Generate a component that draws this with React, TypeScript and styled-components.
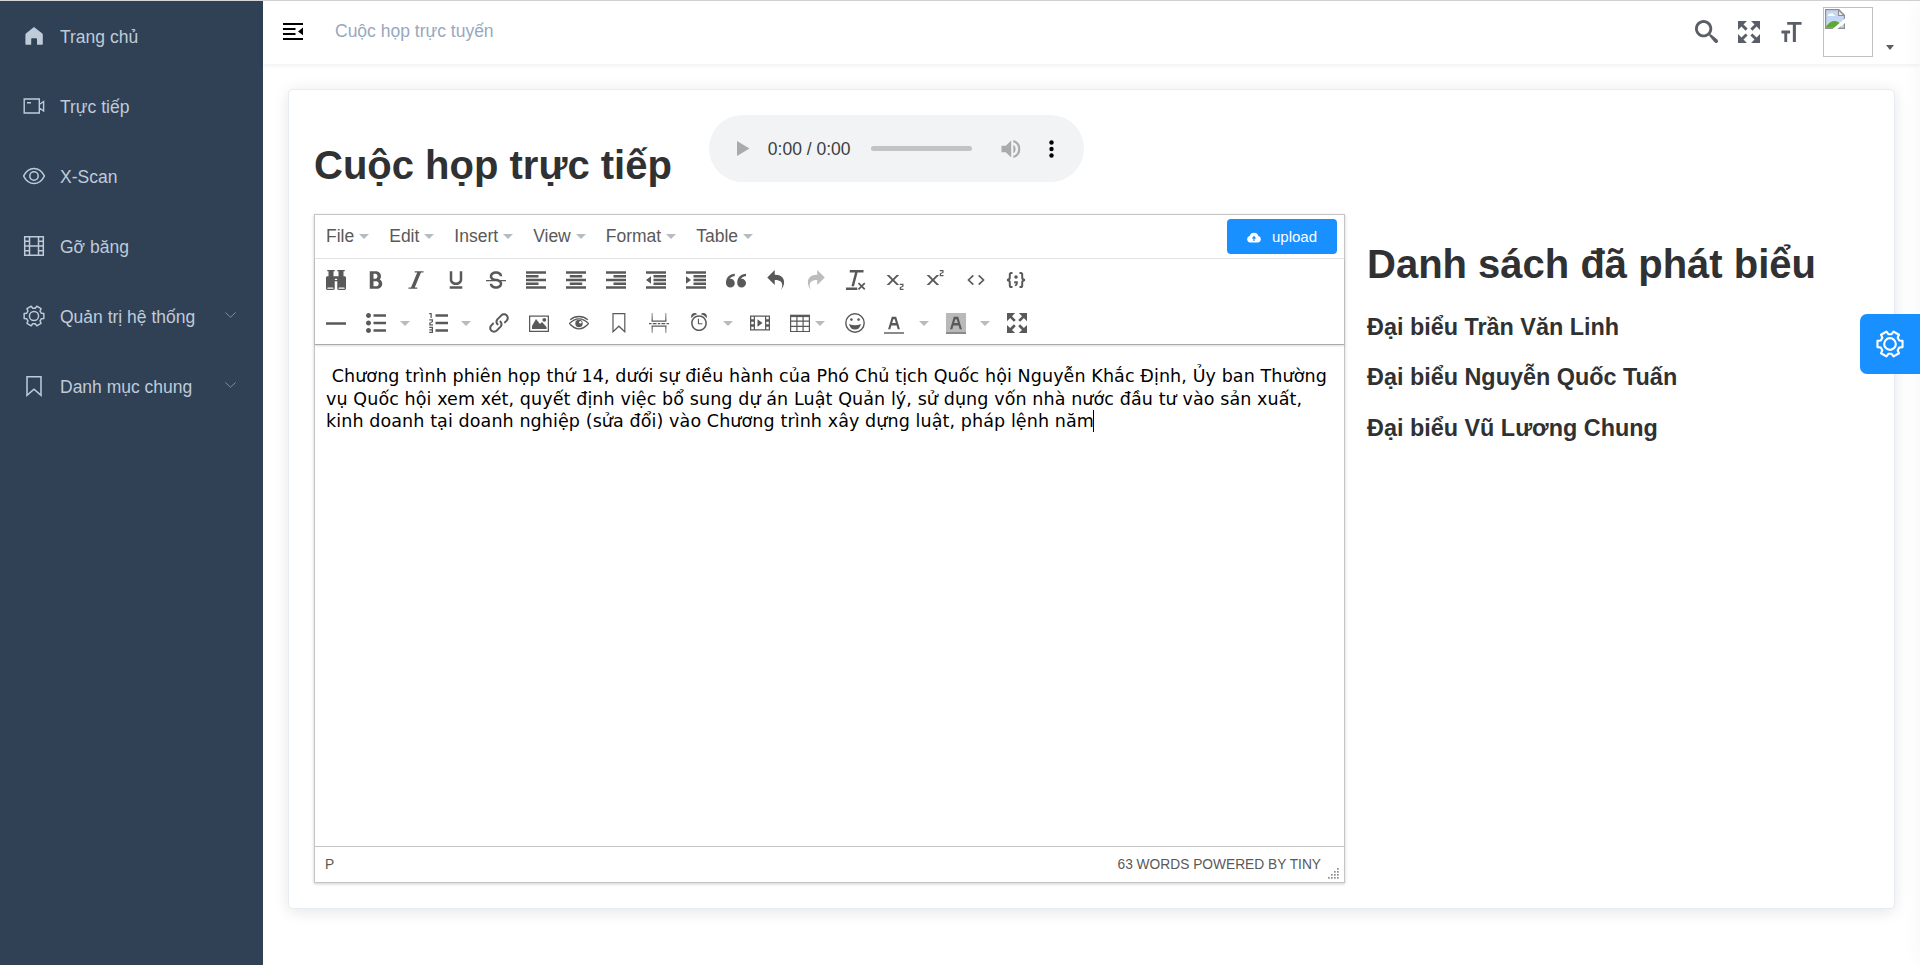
import React from "react";
import styled, { createGlobalStyle } from "styled-components";
import {
  ImBinoculars, ImBold, ImItalic, ImUnderline, ImStrikethrough, ImParagraphLeft, ImParagraphCenter,
  ImParagraphRight, ImIndentDecrease, ImIndentIncrease, ImQuotesLeft, ImUndo2, ImRedo2,
  ImClearFormatting, ImSubscript, ImSuperscript, ImList2, ImListNumbered, ImLink, ImPageBreak,
  ImAlarm, ImFilm, ImEnlarge, ImSearch, ImFontSize, ImTextColor,
} from "react-icons/im";

const GlobalStyle = createGlobalStyle`
  * { box-sizing: border-box; }
  body {
    margin: 0;
    background: #fff;
    color: #303133;
    font-family: "Liberation Sans", Arial, sans-serif;
    font-size: 17.5px;
    overflow: hidden;
  }
  svg { display: block; flex: none; }
`;

/* ---------- page frame ---------- */

const Page = styled.div`
  display: flex;
  height: 965px;
  border-top: 1px solid #d5d6d8;
`;

const Sidebar = styled.nav`
  width: 263px;
  flex: none;
  background: #304156;
`;

const NavItem = styled.a`
  display: flex;
  align-items: center;
  height: 70px;
  padding: 0 27px 0 23px;
  gap: 15px;
  color: #bfcbd9;
  white-space: nowrap;
`;

const NavLabel = styled.span`
  flex: 1;
  padding-top: 3px;
`;

const Main = styled.main`
  flex: 1;
  min-width: 0;
  display: flex;
  flex-direction: column;
`;

const Header = styled.header`
  display: flex;
  align-items: center;
  height: 63px;
  padding: 0 26px 2px 19px;
  box-shadow: 0 1px 5px rgba(0, 21, 41, 0.08);
`;

const Crumb = styled.span`
  margin-left: 31px;
  color: #97a8be;
`;

const HeaderTools = styled.div`
  margin-left: auto;
  display: flex;
  align-items: center;
  color: #5a5e66;
`;

const ToolIcon = styled.span<{ $lift?: number }>`
  margin-right: 20px;
  padding-bottom: ${(p) => p.$lift ?? 0}px;
`;

const Avatar = styled.div`
  width: 50px;
  height: 50px;
  padding: 1px;
  border: 1px solid #c0c0c0;
`;

const AvatarCaret = styled.span`
  align-self: flex-end;
  margin: 0 0 7px 13px;
  border: 4.5px solid transparent;
  border-top: 5px solid #5a5e66;
  border-bottom: 0;
`;

/* ---------- card ---------- */

const Card = styled.section`
  height: 820px;
  margin: 25px 25px 0;
  padding: 25px;
  background: #fff;
  border: 1px solid #e6ebf5;
  border-radius: 5px;
  box-shadow: 0 2.5px 15px rgba(0, 0, 0, 0.1);
`;

const TitleRow = styled.div`
  display: flex;
  align-items: flex-start;
  height: 99px;
`;

const Heading = styled.h1<{ $top: number }>`
  margin: ${(p) => p.$top}px 0 0;
  font-size: 40px;
  line-height: 46px;
  white-space: nowrap;
`;

const Player = styled.div`
  display: flex;
  align-items: center;
  width: 375px;
  height: 67px;
  margin-left: 37px;
  padding: 0 30px 0 28px;
  border-radius: 34px;
  background: #f1f3f4;
`;

const PlayerTime = styled.span`
  width: 83px;
  margin-left: 18px;
  padding-top: 1px;
  color: #3c3e40;
  white-space: nowrap;
`;

const PlayerTrack = styled.span`
  width: 101px;
  height: 5px;
  margin: 0 29px 0 20px;
  border-radius: 3px;
  background: #c1c3c4;
`;

const PlayerMenu = styled.span`
  margin-left: auto;
`;

const Columns = styled.div`
  display: flex;
  gap: 22px;
`;

/* ---------- editor ---------- */

const Editor = styled.div`
  display: flex;
  flex-direction: column;
  width: 1031px;
  height: 669px;
  border: 1px solid #c5c5c5;
  box-shadow: 0 1px 3px rgba(0, 0, 0, 0.2);
  color: #595959;
`;

const MenuBar = styled.div`
  display: flex;
  align-items: center;
  height: 44px;
  padding: 0 7px 0 11px;
  gap: 20px;
  border-bottom: 1px solid #e2e4e7;
`;

const MenuItem = styled.span`
  display: flex;
  align-items: center;
  gap: 5px;
`;

const Caret = styled.i`
  flex: none;
  border: 5px solid transparent;
  border-top-color: #b5bcc2;
  border-bottom: 0;
`;

const Upload = styled.button`
  display: flex;
  align-items: center;
  gap: 11px;
  width: 110px;
  height: 35px;
  margin-left: auto;
  padding: 0 0 0 20px;
  border: 0;
  border-radius: 4px;
  background: #1890ff;
  color: #fff;
  font: 15px "Liberation Sans", Arial, sans-serif;
`;

const Toolbar = styled.div`
  height: 86px;
  padding-left: 11.4px;
  border-bottom: 1px solid #a9a9a9;
  box-shadow: 0 1px 2px rgba(0, 0, 0, 0.15);
`;

const ToolRow = styled.div<{ $height: number }>`
  display: flex;
  align-items: flex-end;
  height: ${(p) => p.$height}px;
  padding-bottom: 11px;
`;

const Tool = styled.span<{ $gap?: number; $dim?: boolean }>`
  width: 20px;
  height: 20px;
  margin-left: ${(p) => p.$gap ?? 0}px;
  opacity: ${(p) => (p.$dim ? 0.4 : 1)};
`;

const CaretSlot = styled.span<{ $gap: number }>`
  display: flex;
  align-items: center;
  height: 20px;
  margin-left: ${(p) => p.$gap}px;
`;

const ColorTool = styled.span<{ $gap: number; $fill: string }>`
  display: flex;
  justify-content: center;
  width: 20px;
  height: 21px;
  margin: 0 0 -1px ${(p) => p.$gap}px;
  border-bottom: 2px solid #8a8a8a;
  background: ${(p) => p.$fill};
`;

const Content = styled.div`
  flex: 1;
  padding: 20px 10px 0 11px;
  color: #000;
  font-family: "DejaVu Sans", Verdana, sans-serif;
  font-size: 17.5px;
  line-height: 22.5px;
  letter-spacing: 0.1px;
`;

const Line = styled.div`
  display: flex;
  align-items: flex-start;
  white-space: pre;
`;

const TextCursor = styled.span`
  width: 1px;
  height: 22px;
  margin-left: -1px;
  background: #000;
`;

const StatusBar = styled.div`
  display: flex;
  align-items: center;
  justify-content: space-between;
  height: 36px;
  padding: 0 4px 0 10px;
  border-top: 1px solid #c5c5c5;
  font-size: 13.75px;
`;

const StatusRight = styled.span`
  display: flex;
  align-items: center;
  gap: 7px;
`;

const Grip = styled.span`
  align-self: flex-end;
  margin-bottom: -8px;
`;

/* ---------- speakers ---------- */

const Speakers = styled.aside`
  flex: 1;
`;

const Speaker = styled.h3<{ $first?: boolean }>`
  margin: ${(p) => (p.$first ? 27 : 23.4)}px 0 0;
  font-size: 23.4px;
  line-height: 27px;
  white-space: nowrap;
`;

const SettingsTab = styled.button`
  position: fixed;
  top: 314px;
  right: 0;
  display: flex;
  align-items: center;
  justify-content: center;
  width: 60px;
  height: 60px;
  padding: 0;
  border: 0;
  border-radius: 7px 0 0 7px;
  background: #1890ff;
  color: #fff;
`;

const DrawerEdge = styled.div`
  position: fixed;
  top: 1px;
  right: -10px;
  bottom: 0;
  width: 10px;
  box-shadow: 0 0 19px rgba(0, 0, 0, 0.05);
`;

/* ---------- drawings ---------- */

type StrokeProps = { size?: number; box?: string; width?: number; children: React.ReactNode };

const Stroke = ({ size = 20, box = "0 0 20 20", width = 1.3, children }: StrokeProps) => (
  <svg width={size} height={size} viewBox={box} fill="none" stroke="currentColor" strokeWidth={width}>
    {children}
  </svg>
);

const polar = (r: number, deg: number) => {
  const a = (deg * Math.PI) / 180;
  return `${(r * Math.cos(a)).toFixed(2)} ${(r * Math.sin(a)).toFixed(2)}`;
};

const gearOutline =
  "M" +
  [0, 60, 120, 180, 240, 300]
    .map((a) => [polar(9.2, a - 21), polar(12, a - 14), polar(12, a + 14), polar(9.2, a + 21)].join("L"))
    .join("L") +
  "Z";

const GearIcon = ({ size, width }: { size: number; width: number }) => (
  <Stroke size={size} box="-13 -13 26 26" width={width}>
    <path d={gearOutline} strokeLinejoin="round" />
    <circle r="5.4" />
  </Stroke>
);

const HomeIcon = () => (
  <svg width="22" height="22" viewBox="0 0 22 22" fill="currentColor">
    <path d="M11 2 19 8.2q.8.6.8 1.6V19q0 .8-.8.8h-5V14q0-.8-.8-.8H9q-.8 0-.8.8v5.8H3.200q-.8 0-.8-.8V9.800q0-1 .8-1.600Z" />
  </svg>
);

const CameraIcon = () => (
  <Stroke size={22} box="0 0 22 22" width={1.4}>
    <path d="M1.200 4h15.100v14H1.200ZM4 7.700h4M16.300 9.500l4.300-3v9.500l-4.300-3" />
  </Stroke>
);

const EyeIcon = () => (
  <Stroke size={22} box="0 0 22 22" width={1.5}>
    <path d="M.600 11C3 6.200 6.800 3.500 11 3.500S19 6.200 21.400 11C19 15.800 15.200 18.500 11 18.500S3 15.800.600 11Z" />
    <circle cx="11" cy="11" r="4.200" />
  </Stroke>
);

const FilmIcon = () => (
  <Stroke size={22} box="0 0 22 22" width={1.5}>
    <path d="M1.700 1.700h18.600v18.600H1.700ZM6.500 1.700v18.600M15.500 1.700v18.600M6.500 11h9M1.700 6.300h4.800M1.700 11h4.800M1.700 15.700h4.800M15.500 6.300h4.800M15.500 11h4.800M15.500 15.700h4.800" />
  </Stroke>
);

const BookmarkIcon = () => (
  <Stroke size={22} box="0 0 22 22" width={1.5}>
    <path d="M4 1.700h14v18.600l-7-6-7 6Z" />
  </Stroke>
);

const ChevronMark = styled.span`
  padding-bottom: 3px;
`;

const Chevron = () => (
  <ChevronMark>
    <svg width="11" height="6" viewBox="0 0 11 6" fill="none" stroke="#808c9a" strokeWidth="1">
      <path d="M.4.500 5.500 5.200 10.600.500" />
    </svg>
  </ChevronMark>
);

const FoldIcon = () => (
  <svg width="22" height="20" viewBox="0 0 22 20" fill="#000">
    <path d="M1 1h20v2H1ZM1 6h12.500v2H1ZM1 11h12.500v2H1ZM1 16h20v2H1ZM21 5.500v7.800l-5-3.900Z" />
  </svg>
);

const CloudIcon = () => (
  <svg width="14" height="12" viewBox="0 0 14 12" fill="currentColor">
    <path
      fillRule="evenodd"
      d="M3.300 11.500A3.300 3.300 0 0 1 2.700 5 4.500 4.500 0 0 1 11.300 5a3.300 3.300 0 0 1-.6 6.500ZM7 4.800 4.700 7.400h1.700V10h1.200V7.400h1.700Z"
    />
  </svg>
);

const BrokenImage = () => (
  <svg width="20" height="20" viewBox="0 0 20 20">
    <path d="M.6.6h13.200l5.600 5.600v13.200H.6Z" fill="#c6d7f5" stroke="#8f8f8f" strokeWidth="1.200" />
    <path d="M3 6.500q.3-2.200 2.500-1.800 2.200-1.200 3 .8 1.600 0 1.500 1.500H3Z" fill="#fff" />
    <path d="M1.200 18.800v-1.500q4-5.300 8.300-5.300 3.500 0 6 3.300v3.500Z" fill="#5caa33" />
    <path d="M20 9.500 7.500 20h4.800L20 14Z" fill="#fff" />
    <path d="M13.500.8v5.700h5.700Z" fill="#eee" stroke="#8f8f8f" strokeWidth="1.100" />
  </svg>
);

const RuleIcon = () => <Stroke width={2.500}><path d="M0 10.500h20" /></Stroke>;

const PictureIcon = () => (
  <Stroke width={1.300}>
    <path d="M.600 3.100h18.800v15.300H.600Z" />
    <path d="M3 16v-3l4-7 4 5 2-2 4.500 5v2Z" fill="currentColor" stroke="none" />
    <circle cx="15.300" cy="6.800" r="1.900" fill="currentColor" stroke="none" />
  </Stroke>
);

const PreviewIcon = () => (
  <Stroke width={1.300}>
    <path d="M.500 10.500Q5 5.800 10 5.800t9.500 4.700Q15 15.800 10 15.800T.500 10.500ZM1.200 6.800Q5 3.500 10 3.500t8.800 3.300" />
    <circle cx="10" cy="10.500" r="3.700" fill="currentColor" stroke="none" />
    <circle cx="11.400" cy="9.300" r="1.200" fill="#fff" stroke="none" />
  </Stroke>
);

const AnchorIcon = () => <Stroke width={1.200}><path d="M4 .600h11.800v18.200l-5.900-5.600L4 18.800Z" /></Stroke>;

const GridIcon = () => (
  <Stroke width={1.200}>
    <path d="M.600 2.500h18.800v16H.600ZM.600 8.200h18.800M.600 13.400h18.800M6.900 3v15.500M13.100 3v15.500" />
    <path d="M0 2.900h20" strokeWidth="2.400" />
  </Stroke>
);

const GrinIcon = () => (
  <Stroke width={1.400}>
    <circle cx="10" cy="10" r="9.200" />
    <circle cx="6.400" cy="6.600" r="1.300" fill="currentColor" stroke="none" />
    <circle cx="13.600" cy="6.600" r="1.300" fill="currentColor" stroke="none" />
    <path d="M4 11q6 2.600 12 0-1.200 5.500-6 5.500T4 11Z" fill="currentColor" stroke="none" />
  </Stroke>
);

const SourceIcon = () => <Stroke width={1.700}><path d="M7.300 5.300 2.500 10l4.800 4.700M12.700 5.300l4.800 4.700-4.800 4.700" /></Stroke>;

const SampleIcon = () => (
  <Stroke width={2}>
    <path d="M6.500 3H5.300Q3.800 3 3.800 4.600V7.500Q3.800 9.800 1 10q2.800.2 2.800 2.500v2.900Q3.800 17 5.300 17h1.200M13.500 3h1.200q1.500 0 1.500 1.600V7.500q0 2.300 2.800 2.500-2.800.2-2.800 2.500v2.900q0 1.600-1.500 1.600h-1.200" />
    <circle cx="10" cy="7" r="1.800" fill="currentColor" stroke="none" />
    <path d="M8.200 11.200h3.600v2q0 2.600-3 3v-1.400q1.300-.3 1.300-1.200H8.200Z" fill="currentColor" stroke="none" />
  </Stroke>
);

const PlayIcon = () => (
  <svg width="13" height="15" viewBox="0 0 13 15" fill="#a8aaab"><path d="M0 0v15l12.500-7.500Z" /></svg>
);

const VolumeIcon = () => (
  <svg width="20" height="20" viewBox="0 0 20 20" fill="#a8aaab">
    <path d="M.5 6.800v6.400h4.300l5.400 5.300v-17L4.800 6.800ZM12.300 5.700v8.600q2.400-1.300 2.400-4.300t-2.400-4.300ZM12.300 1v2.200q4.900 1.700 4.900 6.800t-4.900 6.800V19q7-2 7-9t-7-9Z" />
  </svg>
);

const DotsIcon = () => (
  <svg width="5" height="18" viewBox="0 0 5 18">
    <circle cx="2.500" cy="2.500" r="2.200" /><circle cx="2.500" cy="9" r="2.200" /><circle cx="2.500" cy="15.500" r="2.200" />
  </svg>
);

const gripDots = [0, 1, 2, 3].flatMap((row) => Array.from({ length: row + 1 }, (_, i) => [9 - i * 3, row * 3]));

const GripIcon = () => (
  <svg width="12" height="12" viewBox="0 0 12 12" fill="#8f8f8f">
    {gripDots.map(([x, y]) => <rect key={`${x}-${y}`} x={x} y={y} width="1.700" height="1.700" />)}
  </svg>
);

/* ---------- data ---------- */

const nav = [
  { label: "Trang chủ", icon: <HomeIcon /> },
  { label: "Trực tiếp", icon: <CameraIcon /> },
  { label: "X-Scan", icon: <EyeIcon /> },
  { label: "Gỡ băng", icon: <FilmIcon /> },
  { label: "Quản trị hệ thống", icon: <GearIcon size={22} width={1.7} />, more: true },
  { label: "Danh mục chung", icon: <BookmarkIcon />, more: true },
];

const menus = ["File", "Edit", "Insert", "View", "Format", "Table"];

const formatTools = [
  ImBinoculars, ImBold, ImItalic, ImUnderline, ImStrikethrough, ImParagraphLeft, ImParagraphCenter,
  ImParagraphRight, ImIndentDecrease, ImIndentIncrease, ImQuotesLeft, ImUndo2, ImRedo2,
  ImClearFormatting, ImSubscript, ImSuperscript, SourceIcon, SampleIcon,
];

const speakers = ["Đại biểu Trần Văn Linh", "Đại biểu Nguyễn Quốc Tuấn", "Đại biểu Vũ Lương Chung"];

const DropCaret = ({ gap }: { gap: number }) => <CaretSlot $gap={gap}><Caret /></CaretSlot>;

export default function App() {
  return (
    <>
      <GlobalStyle />
      <Page>
        <Sidebar>
          {nav.map((n) => (
            <NavItem key={n.label}>
              {n.icon}
              <NavLabel>{n.label}</NavLabel>
              {n.more && <Chevron />}
            </NavItem>
          ))}
        </Sidebar>
        <Main>
          <Header>
            <FoldIcon />
            <Crumb>Cuộc họp trực tuyến</Crumb>
            <HeaderTools>
              <ToolIcon><ImSearch size={23} /></ToolIcon>
              <ToolIcon><ImEnlarge size={22} /></ToolIcon>
              <ToolIcon $lift={3}><ImFontSize size={23} /></ToolIcon>
              <Avatar><BrokenImage /></Avatar>
              <AvatarCaret />
            </HeaderTools>
          </Header>
          <Card>
            <TitleRow>
              <Heading $top={27}>Cuộc họp trực tiếp</Heading>
              <Player>
                <PlayIcon />
                <PlayerTime>0:00 / 0:00</PlayerTime>
                <PlayerTrack />
                <VolumeIcon />
                <PlayerMenu><DotsIcon /></PlayerMenu>
              </Player>
            </TitleRow>
            <Columns>
              <Editor>
                <MenuBar>
                  {menus.map((m) => <MenuItem key={m}>{m}<Caret /></MenuItem>)}
                  <Upload><CloudIcon />upload</Upload>
                </MenuBar>
                <Toolbar>
                  <ToolRow $height={42}>
                    {formatTools.map((Icon, i) => (
                      <Tool key={i} $gap={i ? 20 : 0} $dim={Icon === ImRedo2}><Icon size={20} /></Tool>
                    ))}
                  </ToolRow>
                  <ToolRow $height={43}>
                    <Tool><RuleIcon /></Tool>
                    <Tool $gap={20}><ImList2 size={20} /></Tool>
                    <DropCaret gap={14} />
                    <Tool $gap={18}><ImListNumbered size={20} /></Tool>
                    <DropCaret gap={13} />
                    <Tool $gap={18}><ImLink size={20} /></Tool>
                    <Tool $gap={20}><PictureIcon /></Tool>
                    <Tool $gap={20}><PreviewIcon /></Tool>
                    <Tool $gap={20}><AnchorIcon /></Tool>
                    <Tool $gap={20}><ImPageBreak size={20} /></Tool>
                    <Tool $gap={21}><ImAlarm size={18} /></Tool>
                    <DropCaret gap={13} />
                    <Tool $gap={17}><ImFilm size={20} /></Tool>
                    <Tool $gap={20}><GridIcon /></Tool>
                    <DropCaret gap={5} />
                    <Tool $gap={20}><GrinIcon /></Tool>
                    <ColorTool $gap={19} $fill="transparent"><ImTextColor size={20} /></ColorTool>
                    <DropCaret gap={15} />
                    <ColorTool $gap={17} $fill="#b9b9b9"><ImTextColor size={20} /></ColorTool>
                    <DropCaret gap={14} />
                    <Tool $gap={17}><ImEnlarge size={20} /></Tool>
                  </ToolRow>
                </Toolbar>
                <Content>
                  <Line>{"\u00a0Chương trình phiên họp thứ 14, dưới sự điều hành của Phó Chủ tịch Quốc hội Nguyễn Khắc Định, Ủy ban Thường"}</Line>
                  <Line>vụ Quốc hội xem xét, quyết định việc bổ sung dự án Luật Quản lý, sử dụng vốn nhà nước đầu tư vào sản xuất,</Line>
                  <Line>kinh doanh tại doanh nghiệp (sửa đổi) vào Chương trình xây dựng luật, pháp lệnh năm<TextCursor /></Line>
                </Content>
                <StatusBar>
                  <span>P</span>
                  <StatusRight>
                    63 WORDS POWERED BY TINY
                    <Grip><GripIcon /></Grip>
                  </StatusRight>
                </StatusBar>
              </Editor>
              <Speakers>
                <Heading $top={27}>Danh sách đã phát biểu</Heading>
                {speakers.map((s, i) => <Speaker key={s} $first={i === 0}>{s}</Speaker>)}
              </Speakers>
            </Columns>
          </Card>
        </Main>
      </Page>
      <DrawerEdge />
      <SettingsTab><GearIcon size={28} width={2} /></SettingsTab>
    </>
  );
}
